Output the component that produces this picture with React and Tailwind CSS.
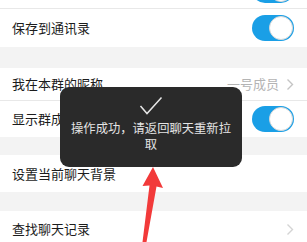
import React from "react";

function Toggle() {
  return (
    <div className="relative h-[26px] w-[42px] rounded-full bg-[#1a9fe6]">
      <div className="absolute right-[1px] top-[1px] h-[24px] w-[24px] rounded-full border border-[#d8d8d8] bg-white" />
    </div>
  );
}

function Chevron({ color = "#c4c4c4" }) {
  return (
    <svg width="8" height="13" viewBox="0 0 8 13" fill="none">
      <path d="M1.5 1.5 L6.5 6.5 L1.5 11.5" stroke={color} strokeWidth="1.4" />
    </svg>
  );
}

function Row({ label, right, height = "h-[38px]", border = true }) {
  return (
    <div
      className={`flex ${height} items-center justify-between bg-white pl-[12px] pr-[13px] ${
        border ? "border-b border-[#e8e8e8]" : ""
      }`}
    >
      <span className="text-[13px] text-[#1c1c1c]">{label}</span>
      {right}
    </div>
  );
}

export default function App() {
  return (
    <div
      className="relative h-[242px] w-[307px] overflow-hidden bg-[#f3f3f3]"
      style={{ fontFamily: '"Noto Sans CJK SC", "Noto Sans", sans-serif' }}
    >
      {/* list */}
      <div className="mt-[-29px]">
        <Row label="" right={<Toggle />} />
        <Row label="保存到通讯录" right={<Toggle />} border={false} />
      </div>

      <div className="h-[21px]" />

      <Row
        label="我在本群的昵称"
        height="h-[33px]"
        right={
          <div className="flex items-center gap-[7px]">
            <span className="text-[13px] text-[#b4b4b4]">一号成员</span>
            <Chevron />
          </div>
        }
      />
      <Row label="显示群成员昵称" height="h-[36px]" right={<Toggle />} border={false} />

      <div className="h-[18px]" />

      <Row label="设置当前聊天背景" height="h-[37px]" border={false} />

      <div className="h-[19px]" />

      <Row label="查找聊天记录" height="h-[36px]" right={<Chevron color="#d4d4d4" />} border={false} />

      {/* toast */}
      <div className="absolute left-[60px] top-[87px] flex h-[80px] w-[182px] flex-col items-center rounded-[9px] bg-[#2a2a2a] px-[10px] pt-[9px]">
        <svg width="24" height="20" viewBox="0 0 24 20" fill="none">
          <path d="M1.5 10 L8 17.5 L22.5 1.5" stroke="#e6e6e6" strokeWidth="1.5" />
        </svg>
        <p className="mt-[4px] text-center text-[12.3px] leading-[16px] text-[#e4e4e4]">
          操作成功，请返回聊天重新拉取
        </p>
      </div>

      {/* red arrow */}
      <svg className="absolute left-0 top-0" width="307" height="242" viewBox="0 0 307 242">
        <path
          d="M153 167 L163 188 L156.5 186.5 L146.5 242 L142.5 242 L149.5 185.5 L142.5 186 Z"
          fill="#f23a3a"
        />
      </svg>
    </div>
  );
}
